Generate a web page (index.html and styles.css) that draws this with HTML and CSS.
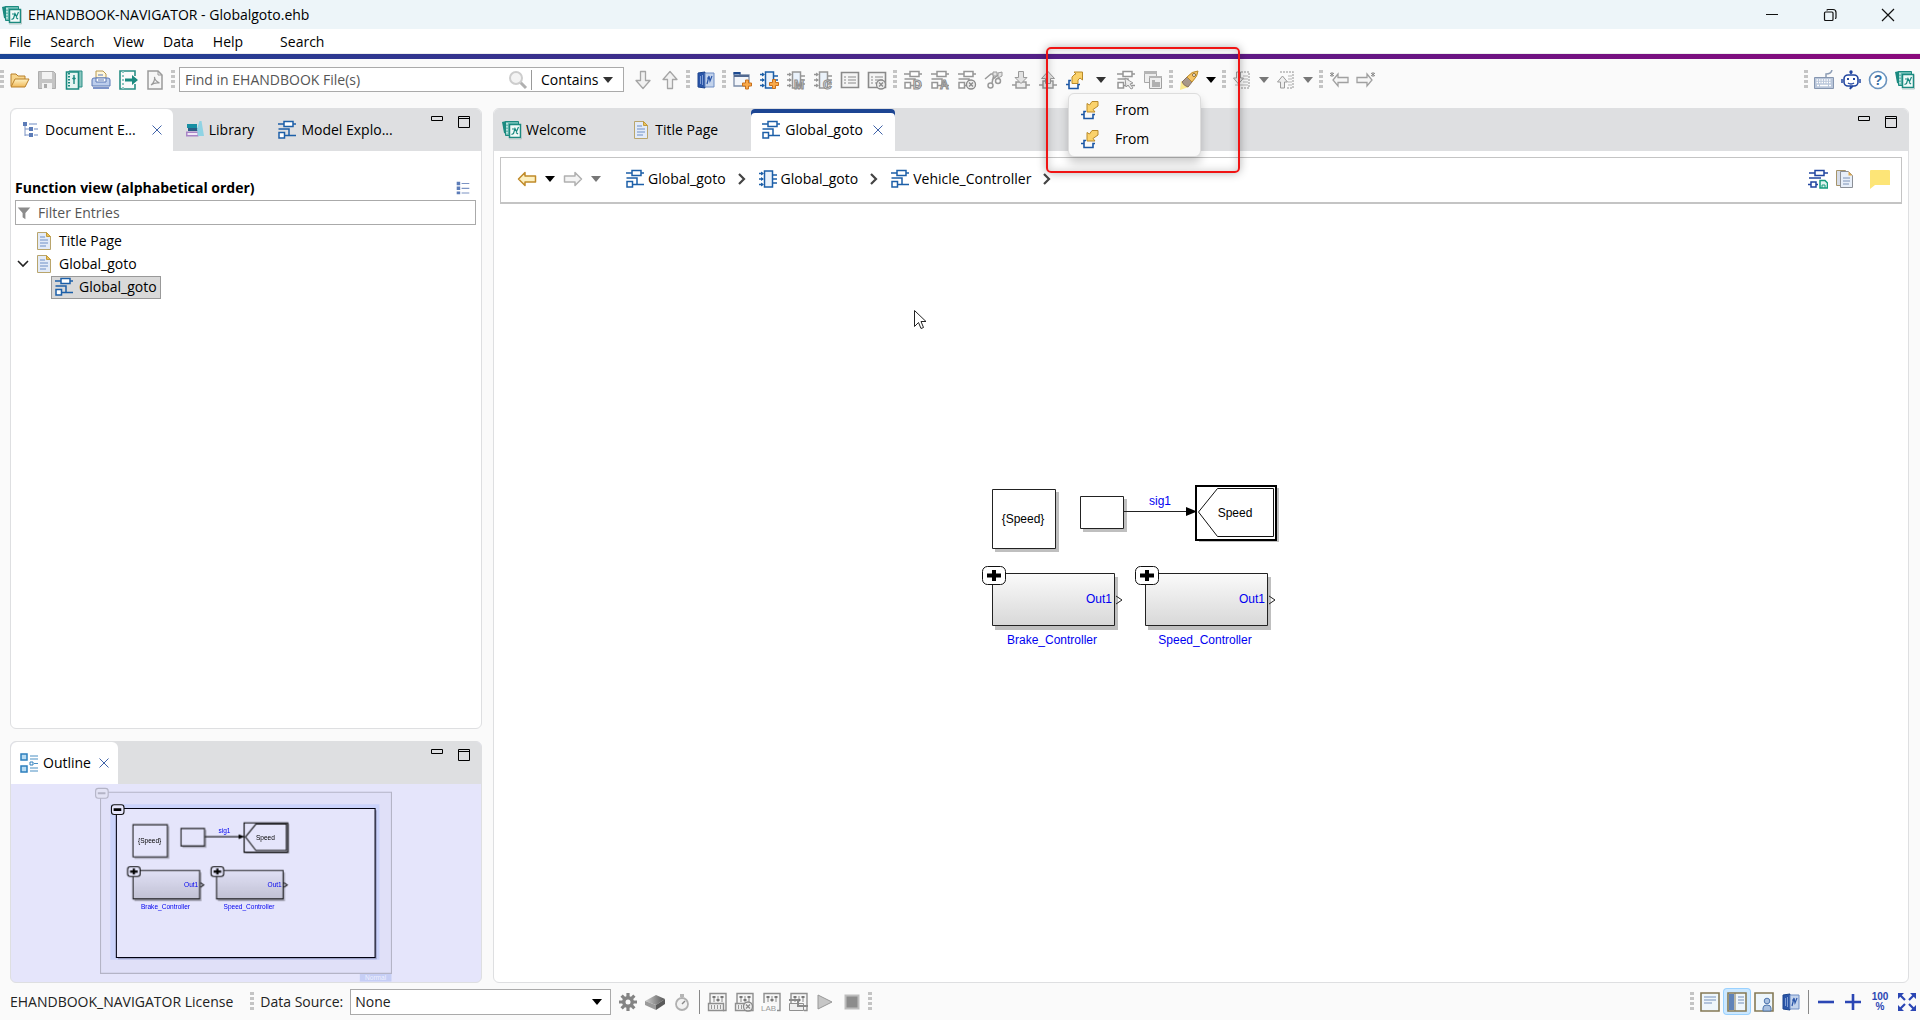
FILE: index.html
```html
<!DOCTYPE html>
<html lang="en">
<head>
<meta charset="utf-8">
<title>EHANDBOOK-NAVIGATOR - Globalgoto.ehb</title>
<link rel="stylesheet" href="styles.css">
</head>
<body>
<svg class="sprite" aria-hidden="true">
  <defs>
    <linearGradient id="g-block" x1="0" y1="0" x2="0" y2="1"><stop offset="0" stop-color="#fafafa"/><stop offset="1" stop-color="#d8d8d8"/></linearGradient>
    <linearGradient id="g-gold" x1="0" y1="0" x2="0" y2="1"><stop offset="0" stop-color="#fff3c4"/><stop offset="1" stop-color="#f0b95a"/></linearGradient>
    <linearGradient id="g-gray" x1="0" y1="0" x2="1" y2="0"><stop offset="0" stop-color="#d0d0d0"/><stop offset="1" stop-color="#555"/></linearGradient>
  </defs>
  <symbol id="i-app" viewBox="0 0 20 20"><path d="M0 2l4-1v13l-2-1z" fill="#1b8a80"/><path d="M3.500 1.500h13v14h-13z" fill="#6dbdb4" stroke="#1b8a80"/><path d="M5 3v12" stroke="#d6efec" stroke-dasharray="1.500 1.500" stroke-width="1.500"/><path d="M7.500 4.500h11v13h-11z" fill="#f1faf8" stroke="#1b8a80" stroke-width="1.500"/><path d="M7 19h12.500V5" fill="none" stroke="#b5c9c7"/><path d="M9.500 14.500l2-1 1.500-5 1.500 3 2-4.500M10 9h2.500M14 12.500l2 1.500" fill="none" stroke="#1b8a80" stroke-width="1.200"/></symbol>
  <symbol id="i-appblue" viewBox="0 0 20 20"><path d="M2 3l7-1v16l-7-1z" fill="#2a55a8" stroke="#1c458f"/><path d="M9 3h9v14H9z" fill="#c3d3ec" stroke="#6d8cc4"/><path d="M4.500 6v8M6.500 5v10" stroke="#7f9dd4"/><path d="M11 14l2-8 1 5 2-5M11 8h3" fill="none" stroke="#2a55a8" stroke-width="1.200"/></symbol>
  <symbol id="i-open" viewBox="0 0 20 20"><path d="M1 16V4h5l2 2h7v3" fill="#f7d58c" stroke="#b9802a" stroke-linejoin="round"/><path d="M1 17l4-8h14l-4 8z" fill="url(#g-gold)" stroke="#b9802a" stroke-linejoin="round"/></symbol>
  <symbol id="i-save" viewBox="0 0 20 20"><path d="M1.500 1.500h15l2 2v15h-17z" fill="#c4c4c4" stroke="#adadad"/><path d="M5 2h10v7H5zM5 13h10v6H5z" fill="#f2f2f2"/><path d="M7 14h3v4H7z" fill="#aaa"/></symbol>
  <symbol id="i-book" viewBox="0 0 20 20"><path d="M5 1h13v16H5z" fill="#8cc7c0" stroke="#2a8f86"/><path d="M2.500 2h12v17h-12z" fill="#e6f5f3" stroke="#1b8a80" stroke-width="1.600"/><path d="M5 3v15" stroke="#1b8a80" stroke-dasharray="1.500 1.500" stroke-width="2"/><path d="M10 5v2m0 1v6M8.500 9L10 7.500 11.500 9" stroke="#1b8a80" stroke-width="1.400" fill="none"/></symbol>
  <symbol id="i-print" viewBox="0 0 20 20"><path d="M5 9V1h7l3 3v5z" fill="#fff7dc" stroke="#b99a50"/><path d="M1 10q0-2 2-2h14q2 0 2 2v6H1z" fill="#bccdec" stroke="#5b79b5"/><path d="M2 17h16v2H2z" fill="#7d94c9"/><path d="M5 8h10v4H5z" fill="#fff" stroke="#5b79b5"/><path d="M7 5h5M7 10h6" stroke="#5b79b5"/></symbol>
  <symbol id="i-export" viewBox="0 0 20 20"><path d="M2 6V1h15v5M2 14v5h15v-5M2 1v18" fill="none" stroke="#2a8f86" stroke-width="1.600"/><path d="M5 1v18" stroke="#8cc7c0" stroke-dasharray="2 2" stroke-width="2"/><path d="M7 8.500h7V5l6 5-6 5v-3.500H7z" fill="#1b8a80"/></symbol>
  <symbol id="i-pdf" viewBox="0 0 20 20"><path d="M3 1h10l4 4v14H3z" fill="#f6f6f6" stroke="#9a9a9a" stroke-width="1.500"/><path d="M13 1v4h4" fill="none" stroke="#9a9a9a"/><path d="M6 15c3-2 4-6 3.500-8 0 3 3 5 5 6-3-.5-6 0-8.500 2z" fill="none" stroke="#9a9a9a" stroke-width="1.200"/></symbol>
  <symbol id="i-lens" viewBox="0 0 20 20"><path d="M12 12l6 6" stroke="#b0b0b0" stroke-width="3"/><circle cx="8" cy="8" r="6" fill="#f3f3f3" stroke="#cdcdcd" stroke-width="2"/></symbol>
  <symbol id="i-down" viewBox="0 0 20 20"><path d="M7.500 1.500h5v9h4.500l-7 8-7-8h4.500z" fill="#f1f1f1" stroke="#a5a5a5" stroke-width="1.300" stroke-linejoin="round"/></symbol>
  <symbol id="i-up" viewBox="0 0 20 20"><path d="M7.500 18.500h5v-9h4.500l-7-8-7 8h4.500z" fill="#f1f1f1" stroke="#a5a5a5" stroke-width="1.300" stroke-linejoin="round"/></symbol>
  <symbol id="i-newtab" viewBox="0 0 20 20"><path d="M2 16V3h6v2h9v11z" fill="#f2f5fa" stroke="#7b8ca8" stroke-width="1.300"/><path d="M1.500 2h7v2.500h-7z" fill="#1c4a91"/><path d="M2 6h15" stroke="#51688f" stroke-width="2"/><path d="M13.500 10h3v3h3v3h-3v3h-3v-3h-3v-3h3z" fill="#f9a94a" stroke="#c8701c"/></symbol>
  <symbol id="i-chip" viewBox="0 0 20 20"><path d="M6.500 2h8v16h-8z" fill="#eaf2fb" stroke="currentColor" stroke-width="1.500"/><path d="M1 4.500h4M1 10h4M1 15.500h4M15 6h4M15 10h4M15 14h4" stroke="currentColor" stroke-width="1.300"/><path d="M3 2.500l3 2-3 2zM3 8l3 2-3 2zM3 13.500l3 2-3 2z" fill="currentColor"/></symbol>
  <symbol id="i-chipadd" viewBox="0 0 20 20"><use href="#i-chip"/><path d="M13.500 9.500h3v3h3v3h-3v3h-3v-3h-3v-3h3z" fill="#f9a94a" stroke="#c8701c"/></symbol>
  <symbol id="i-model" viewBox="0 0 20 20"><path d="M1 4h6M16 4h3M1.500 9H12v6M7 15.500h12" fill="none" stroke="currentColor" stroke-width="1.500"/><path d="M7 1.500h9v5H7zM2 12.500h5.500v5.500H2z" fill="#fff" stroke="currentColor" stroke-width="1.500"/></symbol>
  <symbol id="i-badx" viewBox="0 0 20 20"><circle cx="14" cy="14.500" r="4.500" fill="#eee" stroke="#8a8a8a" stroke-width="1.300"/><path d="M12 12.500l4 4m0-4l-4 4" stroke="#8a8a8a" stroke-width="1.300"/></symbol>
  <symbol id="i-list" viewBox="0 0 20 20"><path d="M1.500 2.500h17v15h-17z" fill="#f4f4f4" stroke="#8a8a8a" stroke-width="1.600"/><path d="M4 7h2M8 7h8M4 10h2M8 10h8M4 13h2M8 13h8" stroke="#8a8a8a" stroke-width="1.200"/></symbol>
  <symbol id="i-cut" viewBox="0 0 20 20"><path d="M1 9l6-5h5M10 4l-2 9M8 10l6-5" stroke="#9a9a9a" stroke-width="1.500" fill="none"/><path d="M9 2h4v4H9zM14 3l4-1v4l-4 2z" fill="#e4e4e4" stroke="#9a9a9a"/><circle cx="6.500" cy="15.500" r="2.500" fill="none" stroke="#9a9a9a" stroke-width="1.500"/><circle cx="14" cy="11" r="2.500" fill="none" stroke="#9a9a9a" stroke-width="1.500"/></symbol>
  <symbol id="i-indown" viewBox="0 0 20 20"><path d="M1 15h4v-3h10v3h4M5 15v3h10v-3" fill="#eee" stroke="#9a9a9a" stroke-width="1.500"/><path d="M7.500 1.500h5v6h3.500l-6 6-6-6h3.500z" fill="#e2e2e2" stroke="#9a9a9a"/></symbol>
  <symbol id="i-inup" viewBox="0 0 20 20"><path d="M1 15h4v-4h10v4h4M5 15v3h10v-3" fill="#eee" stroke="#9a9a9a" stroke-width="1.500"/><path d="M7.500 13.500h5v-5h4l-6.500-7-6.500 7h4z" fill="#e2e2e2" stroke="#9a9a9a"/></symbol>
  <symbol id="i-goto" viewBox="0 0 20 20"><path d="M1 14.500h3M6 10.500H4v8h9v-4h2" fill="none" stroke="#1c57a5" stroke-width="1.600"/><path d="M7 13.500V7l3-3h1l-2-2h8.500v8L15 8l-2 2v3.500z" fill="#fbd26b" stroke="#b98a2a" stroke-linejoin="round"/></symbol>
  <symbol id="i-from" viewBox="0 0 20 20"><path d="M1 14.500h3M6 11.500H4v7h9v-4h2" fill="none" stroke="#1c57a5" stroke-width="1.600"/><path d="M18 1.500h-6L9.500 5 7 3.500V12h8l-2-2.500 5-3.500z" fill="#fbd26b" stroke="#b98a2a" stroke-linejoin="round"/></symbol>
  <symbol id="i-modelptr" viewBox="0 0 20 20"><use href="#i-model"/><path d="M9 8l8 5-3 1 3 4-2 1-3-4-2 2z" fill="#eee" stroke="#9a9a9a"/></symbol>
  <symbol id="i-windows" viewBox="0 0 20 20"><path d="M1.500 1.500h12v11h-12z" fill="#eee" stroke="#a8a8a8"/><path d="M1 1h13v3H1z" fill="#b5b5b5"/><path d="M6.500 6.500h12v12h-12z" fill="#eee" stroke="#a0a0a0"/><path d="M9 10h3v2h5v5H9z" fill="#b0b0b0"/><path d="M6 6h13v2H6z" fill="#b5b5b5"/></symbol>
  <symbol id="i-rocket" viewBox="0 0 20 20"><path d="M1 20l1-9 8 6z" fill="#fbe98f"/><path d="M3 12l5-5 5 5-4 5q-4-1-6-5z" fill="#a8978a" stroke="#8a7360"/><path d="M8 7q5-6 11-6 0 5-6 11z" fill="#f6c465" stroke="#b98a2a"/><circle cx="15" cy="5" r="1.500" fill="#fff" stroke="#8a6a30"/></symbol>
  <symbol id="i-pagedown" viewBox="0 0 20 20"><path d="M9 2h8v16H5" fill="none" stroke="#b5b5b5" stroke-width="1.500" stroke-dasharray="2 1"/><path d="M11 6h5M11 9h5M11 12h5M3 15h13" stroke="#b5b5b5"/><path d="M4.500 2h4v6h3l-5 6-5-6h3z" fill="#eee" stroke="#9a9a9a"/></symbol>
  <symbol id="i-pageup" viewBox="0 0 20 20"><path d="M4 2h13v16H11" fill="none" stroke="#b5b5b5" stroke-width="1.500" stroke-dasharray="2 1"/><path d="M12 6h4M12 9h4M12 12h4M12 15h4" stroke="#b5b5b5"/><path d="M4.500 18h4v-6h3l-5-6-5 6h3z" fill="#eee" stroke="#9a9a9a"/></symbol>
  <symbol id="i-starleft" viewBox="0 0 20 20"><path d="M9 4l-5 6 5 6v-3.500h10v-5H9z" fill="#f6f6f6" stroke="#a0a0a0" stroke-width="1.300"/><path d="M3 2v5M1 3l4 3M5 3L1 6" stroke="#888"/></symbol>
  <symbol id="i-starright" viewBox="0 0 20 20"><path d="M11 4l5 6-5 6v-3.500H1v-5h10z" fill="#f6f6f6" stroke="#a0a0a0" stroke-width="1.300"/><path d="M17 2v5M15 3l4 3M19 3l-4 3" stroke="#888"/></symbol>
  <symbol id="i-keyboard" viewBox="0 0 20 20"><path d="M12 7V4q5 0 6-4" fill="none" stroke="#8d9db5" stroke-width="1.500"/><path d="M.5 7.500h19v11H.5z" fill="#b9c6da" stroke="#8696b0"/><path d="M2.500 10h15M2.500 12.500h15" stroke="#fff" stroke-width="1.500" stroke-dasharray="1.500 1"/><path d="M3 15.500h2m1 0h8m1 0h2" stroke="#fff" stroke-width="1.500"/></symbol>
  <symbol id="i-robot" viewBox="0 0 20 20"><path d="M10 4V2" stroke="#2145a0" stroke-width="1.500"/><circle cx="10" cy="2" r="1.700" fill="#2145a0"/><rect x="3" y="5" width="14" height="11" rx="4" fill="#fff" stroke="#2145a0" stroke-width="1.600"/><path d="M1 9v4M19 9v4M7 13q3 2 6 0M10 16l-1 3 3-3" fill="none" stroke="#2145a0" stroke-width="1.500"/><path d="M6 9h2M12 9h2" stroke="#2145a0" stroke-width="2"/></symbol>
  <symbol id="i-help" viewBox="0 0 20 20"><circle cx="10" cy="10" r="8.500" fill="#fff" stroke="#6a93be" stroke-width="1.600"/></symbol>
  <symbol id="i-doctree" viewBox="0 0 20 20"><path d="M4 4v12M4 9h4M4 15h4" fill="none" stroke="#7c94c4"/><path d="M2 2h4v4H2zM8 7h4v4H8zM8 13h4v4H8z" fill="#5c7cb8"/><path d="M8 4h8M13 9h4M13 15h4" stroke="#9fb2d8" stroke-width="1.500"/></symbol>
  <symbol id="i-library" viewBox="0 0 20 20"><path d="M2 4h10v4H2z" fill="#178fa3"/><path d="M3 8h10v3H3z" fill="#2b5d84"/><path d="M1 11.500h12.500v5H1z" fill="#a884c6"/><path d="M2.500 13h10v2h-10z" fill="#f0e8f6"/><path d="M14.500 1l2 0 2.500 15h-6l-1-7z" fill="#8fd3e4"/></symbol>
  <symbol id="i-page" viewBox="0 0 20 20"><path d="M3.500 1.500h9l4 4v13h-13z" fill="#e3ebf8" stroke="#b9a56c"/><path d="M12.500 1.500v4h4z" fill="#e9c35f" stroke="#c49b3a"/><path d="M6 6h5M6 9h8M6 12h8M6 15h6" stroke="#6f8fc6" stroke-width="1.200"/></symbol>
  <symbol id="i-pages" viewBox="0 0 20 20"><path d="M1.500 1.500h9v15h-9z" fill="#d7dde8" stroke="#a6946a"/><path d="M5.500 2.500h8l4 4v12h-12z" fill="#e8eff9" stroke="#8b8f96"/><path d="M13.500 2.500v4h4z" fill="#e0a94a"/><path d="M8 9h7M8 12h7M8 15h6" stroke="#7d92b6"/></symbol>
  <symbol id="i-modelsave" viewBox="0 0 20 20"><path d="M1 4h6M16 4h4M1 9h12M0 15.500h3M8 15.500h2" stroke="#2145a0" stroke-width="1.500"/><path d="M7 1.500h9v5H7zM3 13h5v5H3z" fill="#fff" stroke="#2145a0" stroke-width="1.500"/><path d="M12 11.500h5l2.500 2.500v5H12z" fill="#dff3ee" stroke="#149c7c" stroke-width="1.500"/><path d="M14 19v-3h3v3" fill="none" stroke="#149c7c"/></symbol>
  <symbol id="i-note" viewBox="0 0 20 20"><path d="M0 2q0-1 1-1h18q1 0 1 1v14H5l-5 4z" fill="#fde577"/></symbol>
  <symbol id="i-back" viewBox="0 0 20 20"><path d="M8 3.500L1.500 10 8 16.500V13h10.500V7H8z" fill="#fdf0c0" stroke="#c08a28" stroke-width="1.500" stroke-linejoin="round"/></symbol>
  <symbol id="i-fwd" viewBox="0 0 20 20"><path d="M12 3.500l6.500 6.500-6.500 6.500V13H1.500V7H12z" fill="#f4f4f4" stroke="#b0b0b0" stroke-width="1.500" stroke-linejoin="round"/></symbol>
  <symbol id="i-filter" viewBox="0 0 20 20"><path d="M1 2h18l-7 8v9l-4-3v-6z" fill="#8c8c8c"/></symbol>
  <symbol id="i-viewlist" viewBox="0 0 20 20"><path d="M1 1h5v5H1zM1 8h5v5H1zM1 15h5v4H1z" fill="#5c7cb8"/><path d="M8 3.500h11M8 10.500h11M8 17h11" stroke="#7c94c4" stroke-width="1.500"/></symbol>
  <symbol id="i-outline" viewBox="0 0 20 20"><path d="M2 1h6v6H2zM2 13h6v6H2z" fill="#b9dcf3" stroke="#2d7fbd" stroke-width="1.500"/><path d="M11 9h3v3h-3z" fill="none" stroke="#2d7fbd"/><path d="M11 3h8M11 6h8M15 10.500h4M11 15h8M11 18h8" stroke="#4a90c4" stroke-width="1.200"/></symbol>
  <symbol id="i-close" viewBox="0 0 20 20"><path d="M1 1l18 18M19 1L1 19" stroke="#4063a8" stroke-width="2"/></symbol>
  <symbol id="i-caret" viewBox="0 0 10 6"><path d="M0 0h10L5 6z" fill="currentColor"/></symbol>
  <symbol id="i-chev" viewBox="0 0 8 12"><path d="M1 1l5 5-5 5" fill="none" stroke="#444" stroke-width="2.200"/></symbol>
  <symbol id="i-expand" viewBox="0 0 12 8"><path d="M1 1l5 5 5-5" fill="none" stroke="#222" stroke-width="1.600"/></symbol>
  <symbol id="i-minview" viewBox="0 0 14 14"><path d="M1.500 1.500h11v4h-11z" fill="none" stroke="#000"/></symbol>
  <symbol id="i-maxview" viewBox="0 0 14 14"><path d="M1.500 1.500h11v11h-11zM1 3.500h12" fill="none" stroke="#000"/></symbol>
  <symbol id="i-wmin" viewBox="0 0 14 14"><path d="M1 6.500h12" stroke="#111"/></symbol>
  <symbol id="i-wrestore" viewBox="0 0 14 14"><rect x="1.500" y="4" width="8.500" height="8.500" rx="1" fill="none" stroke="#111" stroke-width="1.200"/><path d="M4 2.500q0-1 1-1h5q3 0 3 3v5q0 1-1 1" fill="none" stroke="#111" stroke-width="1.200"/></symbol>
  <symbol id="i-wclose" viewBox="0 0 14 14"><path d="M1 1l12 12M13 1L1 13" stroke="#111" stroke-width="1.200"/></symbol>
  <symbol id="i-gear" viewBox="0 0 20 20"><path d="M10 1v18M1 10h18M3.600 3.600l12.800 12.800M16.400 3.600L3.600 16.400" stroke="#848484" stroke-width="3.200"/><circle cx="10" cy="10" r="6" fill="#848484"/><circle cx="10" cy="10" r="2.500" fill="#fafafa"/></symbol>
  <symbol id="i-cube" viewBox="0 0 20 20"><path d="M0 9l11-6 9 4-9 6z" fill="url(#g-gray)"/><path d="M0 9l11 4v5L0 13z" fill="#9a9a9a"/><path d="M11 13l9-6v5l-9 6z" fill="#5a5a5a"/></symbol>
  <symbol id="i-watch" viewBox="0 0 20 20"><circle cx="10" cy="12" r="6" fill="#f2f2f2" stroke="#b0b0b0" stroke-width="1.800"/><path d="M8 2h4v3H8z" fill="#b5b5b5"/><path d="M10 12l3-3" stroke="#888" stroke-width="1.500"/></symbol>
  <symbol id="i-sliders" viewBox="0 0 20 20"><path d="M3 11V1.500h16v17h-3" fill="#f6f6f6" stroke="#8f8f8f" stroke-width="1.400"/><path d="M7 4v6M11 4v6M15 4v6" stroke="#8a8a8a"/><path d="M5.500 5h3M9.500 8h3M13.500 5h3" stroke="#777" stroke-width="1.800"/></symbol>
  <symbol id="i-ruler" viewBox="0 0 20 20"><path d="M1.500 11.500h15v7h-15z" fill="#efefef" stroke="#8f8f8f" stroke-width="1.400"/><path d="M4.500 13v4M7.500 13v4M10.500 13v4M13.500 13v4" stroke="#999"/></symbol>
  <symbol id="i-sl1" viewBox="0 0 20 20"><use href="#i-sliders"/><use href="#i-ruler"/></symbol>
  <symbol id="i-sl2" viewBox="0 0 20 20"><use href="#i-sliders"/><use href="#i-ruler"/><use href="#i-badx"/></symbol>
  <symbol id="i-sl3" viewBox="0 0 20 20"><use href="#i-sliders"/><path d="M0 12h16v8H0z" fill="#fafafa"/></symbol>
  <symbol id="i-sl4" viewBox="0 0 20 20"><use href="#i-sliders"/><path d="M1.500 11.500h14v7h-14z" fill="#efefef" stroke="#8f8f8f"/><path d="M1 8h9v6h10" fill="none" stroke="#8a8a8a" stroke-width="2"/></symbol>
  <symbol id="i-play" viewBox="0 0 20 20"><path d="M3 3l14 7-14 7z" fill="#c6c6c6" stroke="#989898"/></symbol>
  <symbol id="i-stop" viewBox="0 0 20 20"><path d="M3.500 3.500h13v13h-13z" fill="#8c8c8c" stroke="#bdbdbd" stroke-width="2"/></symbol>
  <symbol id="i-viewpage" viewBox="0 0 20 20"><path d="M1 1h18v18H1z" fill="#eef6fb" stroke="#857a55" stroke-width="1.600"/><path d="M4 5h12M4 8h12M4 11h8" stroke="#9db3cf" stroke-width="1.500"/></symbol>
  <symbol id="i-viewsplit" viewBox="0 0 20 20"><path d="M1 1h18v18H1z" fill="#eef6fb" stroke="#857a55" stroke-width="1.600"/><path d="M2 2h5v16H2z" fill="#5f83b8"/><path d="M8 1v18" stroke="#857a55"/><path d="M11 5h6M11 8h6M11 11h6" stroke="#9db3cf" stroke-width="1.500"/></symbol>
  <symbol id="i-viewuser" viewBox="0 0 20 20"><path d="M1 1h18v18H1z" fill="#eef6fb" stroke="#857a55" stroke-width="1.600"/><circle cx="13" cy="9" r="2.800" fill="#a9c1e0" stroke="#4f76ae"/><path d="M9 19v-3q0-3 4-3t4 3v3z" fill="#a9c1e0" stroke="#4f76ae"/></symbol>
  <symbol id="i-minus" viewBox="0 0 20 20"><path d="M2 10h16" stroke="#2b46b4" stroke-width="2.600"/></symbol>
  <symbol id="i-plus" viewBox="0 0 20 20"><path d="M2 10h16M10 2v16" stroke="#2b46b4" stroke-width="2.600"/></symbol>
  <symbol id="i-fit" viewBox="0 0 20 20"><path d="M3 3l5 5M17 3l-5 5M3 17l5-5M17 17l-5-5" stroke="#2b46b4" stroke-width="2.200"/><path d="M1 7V1h6zM13 1h6v6zM1 13v6h6zM19 13v6h-6z" fill="#2b46b4"/></symbol>
  <!-- blocks shared by the editor canvas and the outline thumbnail; thin strokes inherit their width -->
  <symbol id="d-sub" viewBox="0 0 150 76" overflow="visible">
    <path d="M13 11h123v53H13z" fill="#000" opacity=".25"/>
    <path d="M10.500 7.500h122v52h-122z" fill="url(#g-block)" stroke="#222"/>
    <path d="M134 30l6 4-6 4" fill="none" stroke="#222"/>
    <rect x=".5" y=".5" width="23" height="18" rx="5" fill="#fff" stroke="#111"/>
    <path d="M5 9.500h14M12 4v11" stroke="#000" stroke-width="4"/>
  </symbol>
  <symbol id="d-all" viewBox="0 0 860 480" overflow="visible">
    <path d="M501 288h64v60h-64zM589 295h44v33h-44zM705 284h80v54h-80z" fill="#000" opacity=".25"/>
    <path d="M498.500 285.500h63v59h-63zM586.500 292.500h43v32h-43z" fill="#fff" stroke="#222"/>
    <path d="M630 307.500h64" stroke="#222"/>
    <path d="M692 303l11 4.500-11 4.500z" fill="#000"/>
    <path d="M702 282h80v54h-80z" fill="#fff" stroke="#000" stroke-width="2"/>
    <path d="M704.500 308l19-23.500h56v48h-56z" fill="#fff" stroke="#111"/>
    <use href="#d-sub" x="488" y="362" width="150" height="76"/>
    <use href="#d-sub" x="641" y="362" width="150" height="76"/>
  </symbol>
</svg>

<header class="titlebar">
  <svg class="icon"><use href="#i-app"/></svg>
  <h1 class="title">EHANDBOOK-NAVIGATOR - Globalgoto.ehb</h1>
  <div class="winbtns">
    <button type="button" aria-label="Minimize"><svg class="wicon"><use href="#i-wmin"/></svg></button>
    <button type="button" aria-label="Restore"><svg class="wicon"><use href="#i-wrestore"/></svg></button>
    <button type="button" aria-label="Close"><svg class="wicon"><use href="#i-wclose"/></svg></button>
  </div>
</header>
<nav class="menubar" aria-label="Main menu">
  <button type="button">File</button><button type="button">Search</button><button type="button">View</button><button type="button">Data</button><button type="button">Help</button><button type="button" class="menu-extra">Search</button>
</nav>
<div class="accent"></div>

<div class="toolbar" role="toolbar">
  <span class="grip"></span>
  <button type="button" class="tool" aria-label="Open"><svg class="icon"><use href="#i-open"/></svg></button>
  <button type="button" class="tool" aria-label="Save"><svg class="icon"><use href="#i-save"/></svg></button>
  <button type="button" class="tool" aria-label="Handbook"><svg class="icon"><use href="#i-book"/></svg></button>
  <button type="button" class="tool" aria-label="Print"><svg class="icon"><use href="#i-print"/></svg></button>
  <button type="button" class="tool" aria-label="Export"><svg class="icon"><use href="#i-export"/></svg></button>
  <button type="button" class="tool" aria-label="PDF"><svg class="icon"><use href="#i-pdf"/></svg></button>
  <span class="grip"></span>
  <div class="search">
    <input type="text" aria-label="Find" placeholder="Find in EHANDBOOK File(s)">
    <svg class="icon"><use href="#i-lens"/></svg>
    <span class="search-sep"></span>
    <select class="contains" aria-label="Match mode"><option>Contains</option></select>
    <svg class="caret dark"><use href="#i-caret"/></svg>
  </div>
  <button type="button" class="tool after-search" aria-label="Next"><svg class="icon"><use href="#i-down"/></svg></button>
  <button type="button" class="tool" aria-label="Previous"><svg class="icon"><use href="#i-up"/></svg></button>
  <span class="grip"></span>
  <button type="button" class="tool" aria-label="Compare"><svg class="icon"><use href="#i-appblue"/></svg></button>
  <span class="grip"></span>
  <button type="button" class="tool" aria-label="New view"><svg class="icon"><use href="#i-newtab"/></svg></button>
  <button type="button" class="tool blue" aria-label="Add block"><svg class="icon"><use href="#i-chipadd"/></svg></button>
  <button type="button" class="tool gray" aria-label="Block M"><svg class="icon" viewBox="0 0 20 20"><use href="#i-chip"/><text x="8" y="19" class="glyph badge-letter">M</text></svg></button>
  <button type="button" class="tool gray" aria-label="Block C"><svg class="icon" viewBox="0 0 20 20"><use href="#i-chip"/><text x="10" y="19" class="glyph badge-letter">C</text></svg></button>
  <button type="button" class="tool" aria-label="List"><svg class="icon"><use href="#i-list"/></svg></button>
  <button type="button" class="tool" aria-label="Clear list"><svg class="icon" viewBox="0 0 20 20"><use href="#i-list"/><use href="#i-badx"/></svg></button>
  <span class="grip"></span>
  <button type="button" class="tool gray" aria-label="Model D"><svg class="icon" viewBox="0 0 20 20"><use href="#i-model"/><text x="10" y="19" class="glyph badge-letter">D</text></svg></button>
  <button type="button" class="tool gray" aria-label="Model A"><svg class="icon" viewBox="0 0 20 20"><use href="#i-model"/><text x="10" y="19" class="glyph badge-letter">A</text></svg></button>
  <button type="button" class="tool gray" aria-label="Remove model"><svg class="icon" viewBox="0 0 20 20"><use href="#i-model"/><use href="#i-badx"/></svg></button>
  <button type="button" class="tool" aria-label="Cut"><svg class="icon"><use href="#i-cut"/></svg></button>
  <button type="button" class="tool" aria-label="Step in"><svg class="icon"><use href="#i-indown"/></svg></button>
  <button type="button" class="tool" aria-label="Step out"><svg class="icon"><use href="#i-inup"/></svg></button>
  <div class="dropdown">
    <button type="button" class="tool" aria-label="Go to"><svg class="icon"><use href="#i-goto"/></svg></button>
    <button type="button" class="tool arrow wide" aria-label="Go to options" aria-expanded="true"><svg class="caret dark"><use href="#i-caret"/></svg></button>
    <div class="callout"></div>
    <div class="popup" role="menu">
      <button type="button" role="menuitem"><svg class="icon"><use href="#i-from"/></svg>From</button>
      <button type="button" role="menuitem"><svg class="icon"><use href="#i-from"/></svg>From</button>
    </div>
  </div>
  <button type="button" class="tool gray" aria-label="Select in model"><svg class="icon"><use href="#i-modelptr"/></svg></button>
  <button type="button" class="tool" aria-label="Windows"><svg class="icon"><use href="#i-windows"/></svg></button>
  <span class="grip"></span>
  <button type="button" class="tool" aria-label="Launch"><svg class="icon"><use href="#i-rocket"/></svg></button>
  <button type="button" class="tool arrow" aria-label="Launch options"><svg class="caret black"><use href="#i-caret"/></svg></button>
  <span class="grip"></span>
  <button type="button" class="tool" aria-label="Next annotation"><svg class="icon"><use href="#i-pagedown"/></svg></button>
  <button type="button" class="tool arrow" aria-label="Next options"><svg class="caret"><use href="#i-caret"/></svg></button>
  <button type="button" class="tool" aria-label="Previous annotation"><svg class="icon"><use href="#i-pageup"/></svg></button>
  <button type="button" class="tool arrow" aria-label="Previous options"><svg class="caret"><use href="#i-caret"/></svg></button>
  <span class="grip"></span>
  <button type="button" class="tool" aria-label="Last edit"><svg class="icon"><use href="#i-starleft"/></svg></button>
  <button type="button" class="tool" aria-label="Next edit"><svg class="icon"><use href="#i-starright"/></svg></button>
  <span class="grip push"></span>
  <button type="button" class="tool" aria-label="Keyboard"><svg class="icon"><use href="#i-keyboard"/></svg></button>
  <button type="button" class="tool" aria-label="Assistant"><svg class="icon"><use href="#i-robot"/></svg></button>
  <button type="button" class="tool" aria-label="Help"><svg class="icon" viewBox="0 0 20 20"><use href="#i-help"/><text x="10" y="15" text-anchor="middle" class="glyph glyph-help">?</text></svg></button>
  <button type="button" class="tool" aria-label="About"><svg class="icon"><use href="#i-app"/></svg></button>
</div>

<main class="workspace">
  <div class="side">
    <section class="panel explorer">
      <div class="tabs" role="tablist">
        <div class="tab active"><button type="button" role="tab" aria-selected="true"><svg class="icon"><use href="#i-doctree"/></svg>Document E...</button><button type="button" class="close" aria-label="Close"><svg class="xicon"><use href="#i-close"/></svg></button></div>
        <div class="tab"><button type="button" role="tab"><svg class="icon"><use href="#i-library"/></svg>Library</button></div>
        <div class="tab tight blue"><button type="button" role="tab"><svg class="icon"><use href="#i-model"/></svg>Model Explo...</button></div>
        <div class="viewbtns"><button type="button" aria-label="Minimize view"><svg class="wicon"><use href="#i-minview"/></svg></button><button type="button" aria-label="Maximize view"><svg class="wicon"><use href="#i-maxview"/></svg></button></div>
      </div>
      <div class="explorer-body">
        <div class="heading"><h2>Function view (alphabetical order)</h2><button type="button" aria-label="View mode"><svg class="sicon"><use href="#i-viewlist"/></svg></button></div>
        <div class="filter"><svg class="sicon"><use href="#i-filter"/></svg><input type="text" aria-label="Filter" placeholder="Filter Entries"></div>
        <ul class="tree">
          <li><span class="twist"></span><svg class="icon"><use href="#i-page"/></svg>Title Page</li>
          <li><span class="twist"><svg class="expand"><use href="#i-expand"/></svg></span><svg class="icon"><use href="#i-page"/></svg>Global_goto</li>
          <li class="child"><span class="selected blue"><svg class="icon"><use href="#i-model"/></svg>Global_goto</span></li>
        </ul>
      </div>
    </section>
    <section class="panel outline">
      <div class="tabs" role="tablist">
        <div class="tab active snug"><button type="button" role="tab" aria-selected="true"><svg class="icon"><use href="#i-outline"/></svg>Outline</button><button type="button" class="close near" aria-label="Close"><svg class="xicon"><use href="#i-close"/></svg></button></div>
        <div class="viewbtns"><button type="button" aria-label="Minimize view"><svg class="wicon"><use href="#i-minview"/></svg></button><button type="button" aria-label="Maximize view"><svg class="wicon"><use href="#i-maxview"/></svg></button></div>
      </div>
      <svg class="thumb" viewBox="275 211 861 362">
        <path d="M439 226h533v332H439z" fill="#e0e0f8" stroke="#b4b4c6" stroke-width="2"/>
        <rect x="430" y="219" width="23" height="18" rx="5" fill="#e3e3f5" stroke="#b4b4c6" stroke-width="2"/>
        <path d="M434 228h14" stroke="#b4b4c6" stroke-width="4"/>
        <path d="M457 248h493v285H457z" fill="#cbd3fb"/>
        <path d="M471 259h474v273H471z" fill="#9a9fc4"/>
        <path d="M468 256h474v273H468z" fill="#e5e5fb" stroke="#000010" stroke-width="2"/>
        <rect x="459" y="249" width="23" height="18" rx="5" fill="#e5e5fb" stroke="#111" stroke-width="2"/>
        <path d="M463 258h14" stroke="#000" stroke-width="5"/>
        <path d="M914 559h58v14h-58z" fill="#c6cef5"/>
        <text x="943" y="570" class="dtext pale">Normal</text>
        <g class="tint">
        <use href="#d-all" x="0" y="0" width="860" height="480"/>
        </g>
        <text x="529" y="319" class="dtext">{Speed}</text>
        <text x="666" y="301" class="dtext sig">sig1</text>
        <text x="741" y="313" class="dtext">Speed</text>
        <text x="605" y="399" class="dtext sig">Out1</text>
        <text x="758" y="399" class="dtext sig">Out1</text>
        <text x="558" y="440" class="dtext sig">Brake_Controller</text>
        <text x="711" y="440" class="dtext sig">Speed_Controller</text>
      </svg>
    </section>
  </div>

  <section class="panel editor">
    <div class="tabs" role="tablist">
      <div class="tab first"><button type="button" role="tab"><svg class="icon"><use href="#i-app"/></svg>Welcome</button></div>
      <div class="tab spaced"><button type="button" role="tab"><svg class="icon"><use href="#i-page"/></svg>Title Page</button></div>
      <div class="tab active marked blue"><button type="button" role="tab" aria-selected="true"><svg class="icon"><use href="#i-model"/></svg>Global_goto</button><button type="button" class="close near" aria-label="Close"><svg class="xicon"><use href="#i-close"/></svg></button></div>
      <div class="viewbtns"><button type="button" aria-label="Minimize view"><svg class="wicon"><use href="#i-minview"/></svg></button><button type="button" aria-label="Maximize view"><svg class="wicon"><use href="#i-maxview"/></svg></button></div>
    </div>
    <div class="crumbbar">
      <div class="history">
        <button type="button" aria-label="Back"><svg class="icon"><use href="#i-back"/></svg></button>
        <button type="button" aria-label="Back history"><svg class="caret black"><use href="#i-caret"/></svg></button>
        <button type="button" aria-label="Forward"><svg class="icon"><use href="#i-fwd"/></svg></button>
        <button type="button" aria-label="Forward history"><svg class="caret"><use href="#i-caret"/></svg></button>
      </div>
      <nav class="crumbs blue" aria-label="Breadcrumb">
        <a href="#root"><svg class="icon"><use href="#i-model"/></svg>Global_goto</a><svg class="chev"><use href="#i-chev"/></svg>
        <a href="#block"><svg class="icon"><use href="#i-chip"/></svg>Global_goto</a><svg class="chev"><use href="#i-chev"/></svg>
        <a href="#vehicle"><svg class="icon"><use href="#i-model"/></svg>Vehicle_Controller</a><svg class="chev"><use href="#i-chev"/></svg>
      </nav>
      <div class="crumbtools">
        <button type="button" aria-label="Save model view"><svg class="icon"><use href="#i-modelsave"/></svg></button>
        <button type="button" aria-label="Copy"><svg class="icon"><use href="#i-pages"/></svg></button>
        <button type="button" class="note" aria-label="Note"><svg class="icon"><use href="#i-note"/></svg></button>
      </div>
    </div>
    <svg class="canvas">
      <use href="#d-all" x="0" y="0" width="860" height="480"/>
      <text x="529" y="319" class="dtext">{Speed}</text>
      <text x="666" y="301" class="dtext sig">sig1</text>
      <text x="741" y="313" class="dtext">Speed</text>
      <text x="605" y="399" class="dtext sig">Out1</text>
      <text x="758" y="399" class="dtext sig">Out1</text>
      <text x="558" y="440" class="dtext sig">Brake_Controller</text>
      <text x="711" y="440" class="dtext sig">Speed_Controller</text>
      <path d="M420.500 106.500v16l4-4 2.500 6 2.500-1-2.500-6h5z" fill="#fff" stroke="#222"/>
    </svg>
  </section>
</main>

<footer class="status">
  <span class="license">EHANDBOOK_NAVIGATOR License</span>
  <span class="grip"></span>
  <label for="source">Data Source:</label>
  <div class="source"><select id="source"><option>None</option></select><svg class="caret black"><use href="#i-caret"/></svg></div>
  <button type="button" class="tool after-source" aria-label="Settings"><svg class="icon"><use href="#i-gear"/></svg></button>
  <button type="button" class="tool" aria-label="Data"><svg class="icon"><use href="#i-cube"/></svg></button>
  <button type="button" class="tool" aria-label="Timer"><svg class="icon"><use href="#i-watch"/></svg></button>
  <span class="rule"></span>
  <button type="button" class="tool" aria-label="Calibrate"><svg class="icon"><use href="#i-sl1"/></svg></button>
  <button type="button" class="tool" aria-label="Remove calibration"><svg class="icon"><use href="#i-sl2"/></svg></button>
  <button type="button" class="tool" aria-label="Lab"><svg class="icon" viewBox="0 0 20 20"><use href="#i-sl3"/><text x="0" y="19" class="glyph glyph-lab">LAB</text></svg></button>
  <button type="button" class="tool" aria-label="Link"><svg class="icon"><use href="#i-sl4"/></svg></button>
  <button type="button" class="tool" aria-label="Play"><svg class="icon"><use href="#i-play"/></svg></button>
  <button type="button" class="tool" aria-label="Stop"><svg class="icon"><use href="#i-stop"/></svg></button>
  <span class="grip"></span>
  <span class="grip push"></span>
  <button type="button" class="tool" aria-label="Page layout"><svg class="icon"><use href="#i-viewpage"/></svg></button>
  <button type="button" class="tool pressed" aria-label="Split layout" aria-pressed="true"><svg class="icon"><use href="#i-viewsplit"/></svg></button>
  <button type="button" class="tool" aria-label="User layout"><svg class="icon"><use href="#i-viewuser"/></svg></button>
  <button type="button" class="tool" aria-label="Handbook layout"><svg class="icon"><use href="#i-appblue"/></svg></button>
  <span class="rule"></span>
  <button type="button" class="tool" aria-label="Zoom out"><svg class="icon"><use href="#i-minus"/></svg></button>
  <button type="button" class="tool" aria-label="Zoom in"><svg class="icon"><use href="#i-plus"/></svg></button>
  <button type="button" class="tool zoom100" aria-label="Zoom 100%"><span>100</span><span>%</span></button>
  <button type="button" class="tool" aria-label="Fit"><svg class="icon"><use href="#i-fit"/></svg></button>
</footer>
</body>
</html>
```
FILE: styles.css
```css
* { box-sizing: border-box; }
body {
  margin: 0;
  min-height: 100vh;
  display: flex;
  flex-direction: column;
  background: #fafafa;
  color: #000;
  font: 14px/20px "Open Sans", "Noto Sans", sans-serif;
}
button, input, select {
  margin: 0;
  padding: 0;
  border: 0;
  background: none;
  color: inherit;
  font: inherit;
}
button { display: inline-flex; align-items: center; }
select { appearance: none; }
input { min-width: 0; outline: 0; }
input::placeholder { color: #555; opacity: 1; }
svg { flex: none; display: block; }
.sprite { position: absolute; width: 0; height: 0; }
.icon { width: 20px; height: 20px; }
.sicon { width: 14px; height: 14px; }
.wicon { width: 14px; height: 14px; }
.xicon { width: 10px; height: 10px; }
.caret { width: 10px; height: 6px; color: #777; }
.caret.dark { color: #333; }
.caret.black { color: #000; }
.blue .icon { color: #1c5fa8; }
.gray .icon { color: #969696; }
.glyph { font-family: "Liberation Sans", Arial, sans-serif; font-weight: bold; }
.glyph-help { font-size: 14px; fill: #3c6fa3; }
.glyph-lab { font-size: 8px; font-weight: normal; fill: #999; }
.badge-letter { font-size: 12px; fill: #e6e6e6; stroke: #8c8c8c; stroke-width: 1px; }
.zoom100 {
  width: 20px;
  flex-direction: column;
  color: #2b46b4;
  font: bold 10px/10px "Liberation Sans", Arial, sans-serif;
}

.titlebar {
  display: flex;
  align-items: center;
  gap: 6px;
  height: 29px;
  padding-left: 2px;
  background: #edf5f9;
}
.title { margin: 0; font-size: 14px; font-weight: normal; }
.winbtns { display: flex; gap: 44px; margin-left: auto; padding-right: 25px; }
.menubar {
  display: flex;
  gap: 19px;
  height: 25px;
  padding: 1px 9px 0;
  background: #fff;
  border-bottom: 1px solid #eee;
}
.menu-extra { margin-left: 18px; }
.accent { height: 5px; background: linear-gradient(90deg, #1b4596, #3a2f8c 30%, #6a1483 75%, #8a0a7c); }

.toolbar {
  display: flex;
  align-items: center;
  gap: 7px;
  height: 41px;
  padding-right: 5px;
}
.tool { flex: none; }
.grip {
  flex: none;
  width: 4px;
  height: 19px;
  margin: 0 -1px;
  background: repeating-linear-gradient(#c4c4c4 0 3px, transparent 3px 5px);
}
.toolbar > .grip:first-child { margin-left: 0; }
.push { margin-left: auto; }
.search {
  display: flex;
  align-items: center;
  width: 445px;
  height: 25px;
  margin-left: -2px;
  padding: 0 10px 0 5px;
  background: #fff;
  border: 1px solid #aaa;
}
.search input { flex: 1; }
.search-sep { width: 1px; height: 20px; margin: 0 9px 0 3px; background: #999; }
.contains { width: 62px; }
.after-search { margin-left: 2px; }
.arrow { width: 10px; }
.arrow.wide { width: 17px; justify-content: center; }
.dropdown { position: relative; display: flex; align-items: center; gap: 7px; }
.callout {
  position: absolute;
  z-index: 3;
  left: -19px;
  top: -23px;
  width: 194px;
  height: 126px;
  border: 2px solid #f01414;
  border-radius: 5px;
  box-shadow: 0 0 10px rgba(0, 0, 0, .3), inset 0 0 10px rgba(0, 0, 0, .2);
  pointer-events: none;
}
.popup {
  position: absolute;
  z-index: 2;
  left: 3px;
  top: 23px;
  width: 133px;
  padding: 2px 0;
  background: #f9f9f9;
  border: 1px solid #ddd;
  border-radius: 6px;
  box-shadow: 0 6px 10px rgba(0, 0, 0, .2);
}
.popup button { width: 100%; height: 28px; gap: 15px; padding-left: 11px; }

.workspace {
  flex: 1;
  display: grid;
  grid-template-columns: minmax(0, 1fr) minmax(0, 3fr);
  gap: 11px;
  padding: 8px 11px 0 10px;
}
.side { display: flex; flex-direction: column; gap: 12px; }
.panel {
  display: flex;
  flex-direction: column;
  overflow: hidden;
  background: #fff;
  border: 1px solid #dedfe1;
  border-radius: 6px;
}
.explorer, .editor { flex: 1; }
.tabs { display: flex; height: 42px; background: #dedfe1; }
.tab { display: flex; align-items: center; padding: 0 13px 0 12px; }
.tab button { gap: 4px; white-space: nowrap; }
.tab.active { background: #fff; border-radius: 6px 6px 0 0; padding: 0 11px 0 10px; }
.tab.tight { padding: 0 10px; }
.tab.snug { padding: 0 9px 0 8px; }
.tab.first { padding: 0 12px 0 8px; }
.tab.spaced { padding: 0 33px; }
.tab.marked { padding: 0 12px 0 10px; border-radius: 4px 4px 0 0; box-shadow: inset 0 4px #1c4593; }
.close { margin-left: 16px; }
.close.near { margin-left: 10px; }
.snug .close { margin-left: 8px; }
.viewbtns { display: flex; align-items: flex-start; gap: 13px; margin-left: auto; padding: 6px 10px 0 0; }
.explorer-body { padding: 25px 5px 0 4px; }
.heading { display: flex; justify-content: space-between; align-items: center; padding-right: 6px; }
h2 { margin: 0; padding-bottom: 1px; font-size: 14px; line-height: 23px; font-weight: bold; }
.filter {
  display: flex;
  align-items: center;
  gap: 7px;
  height: 25px;
  padding-left: 1px;
  border: 1px solid #aaa;
}
.filter input { flex: 1; }
.tree { list-style: none; margin: 4px 0 0; padding: 0; }
.tree li { display: flex; align-items: center; gap: 5px; height: 23px; }
.twist { width: 14px; }
.expand { width: 12px; height: 8px; margin-left: 2px; }
.tree .child { height: 24px; padding-left: 36px; }
.selected { display: flex; align-items: center; gap: 5px; height: 23px; padding: 0 3px 0 2px; background: #d9d9d9; border: 1px solid #999; }
.outline { background: #e5e5fb; }
.thumb { width: 100%; height: auto; }
.tint { mix-blend-mode: multiply; stroke-width: 2px; }
.dtext { font: 12px "Liberation Sans", Arial, sans-serif; text-anchor: middle; fill: #000; }
.dtext.sig { fill: #0000f0; }
.dtext.pale { fill: #eef0ff; }

.crumbbar {
  display: flex;
  align-items: center;
  height: 47px;
  margin: 6px 6px 0;
  padding: 0 11px 2px 16px;
  border: 1px solid #c4c4c4;
  border-bottom-width: 2px;
}
.history { display: flex; gap: 8px; }
.crumbs { display: flex; align-items: center; gap: 12px; margin-left: 24px; }
.crumbs a { display: flex; align-items: center; gap: 3px; color: inherit; text-decoration: none; }
.chev { width: 8px; height: 12px; }
.crumbtools { display: flex; gap: 7px; margin-left: auto; }
.crumbtools .note { margin-left: 8px; }
.canvas { flex: 1; width: 100%; }

.status { display: flex; align-items: center; gap: 7px; height: 37px; padding: 0 3px 0 10px; color: #222; }
.license { margin-right: 11px; }
.source {
  display: flex;
  align-items: center;
  width: 261px;
  height: 26px;
  padding: 0 8px 0 4px;
  background: #fff;
  border: 1px solid #aaa;
}
.source select { flex: 1; }
.rule { width: 1px; height: 24px; background: #888; }
.pressed { height: 25px; margin: 0 -3px; padding: 0 3px; background: #cce8ff; border-radius: 3px; box-shadow: 0 0 0 1px #99d1ff; }
```
